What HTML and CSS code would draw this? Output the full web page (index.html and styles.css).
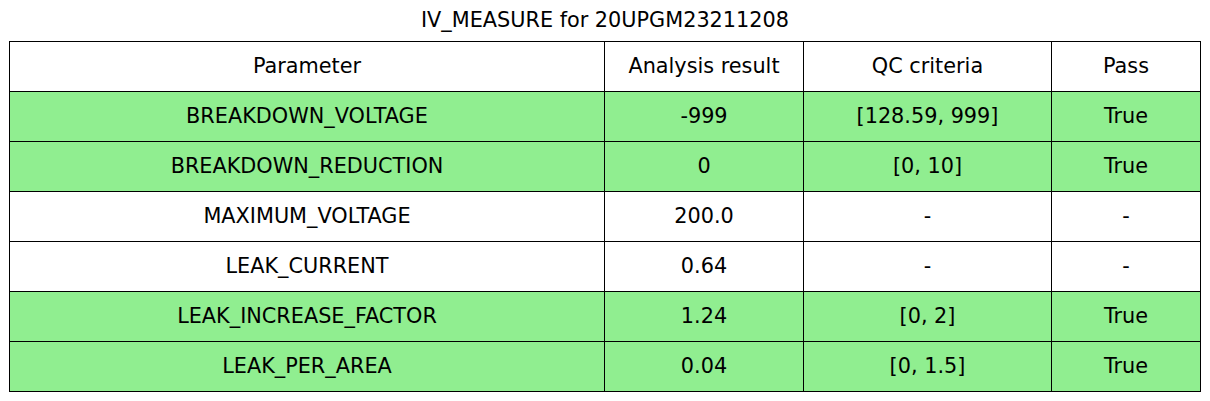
FILE: index.html
```html
<!DOCTYPE html>
<html>
<head>
<meta charset="utf-8">
<link rel="stylesheet" href="styles.css">
</head>
<body>
<div class="page">
  <div class="title">IV_MEASURE for 20UPGM23211208</div>
  <table class="qc">
    <colgroup>
      <col class="c1"><col class="c2"><col class="c3"><col class="c4">
    </colgroup>
    <thead>
      <tr><th>Parameter</th><th>Analysis result</th><th>QC criteria</th><th>Pass</th></tr>
    </thead>
    <tbody>
      <tr class="ok"><td>BREAKDOWN_VOLTAGE</td><td>-999</td><td>[128.59, 999]</td><td>True</td></tr>
      <tr class="ok"><td>BREAKDOWN_REDUCTION</td><td>0</td><td>[0, 10]</td><td>True</td></tr>
      <tr><td>MAXIMUM_VOLTAGE</td><td>200.0</td><td>-</td><td>-</td></tr>
      <tr><td>LEAK_CURRENT</td><td>0.64</td><td>-</td><td>-</td></tr>
      <tr class="ok"><td>LEAK_INCREASE_FACTOR</td><td>1.24</td><td>[0, 2]</td><td>True</td></tr>
      <tr class="ok"><td>LEAK_PER_AREA</td><td>0.04</td><td>[0, 1.5]</td><td>True</td></tr>
    </tbody>
  </table>
</div>
</body>
</html>
```
FILE: styles.css
```css
html, body {
  margin: 0;
  padding: 0;
  background: #ffffff;
}
body {
  font-family: "DejaVu Sans", sans-serif;
  color: #000000;
}
.page {
  width: 1210px;
  height: 401px;
  display: flex;
  flex-direction: column;
  align-items: center;
}
.title {
  font-size: 20.8px;
  height: 40px;
  line-height: 40px;
  padding-bottom: 1px;
  text-align: center;
}
.qc {
  border-collapse: collapse;
  width: 1191px;
  table-layout: fixed;
}
.c1 { width: 595px; }
.c2 { width: 199px; }
.c3 { width: 248px; }
.c4 { width: 149px; }
.qc th, .qc td {
  border: 1px solid #000000;
  height: 50px;
  padding: 0 0 2px 0;
  text-align: center;
  vertical-align: middle;
  box-sizing: border-box;
  font-size: 20.8px;
}
.qc th {
  font-weight: normal;
}
.qc tr.ok td {
  background: #90ee90;
}
```
